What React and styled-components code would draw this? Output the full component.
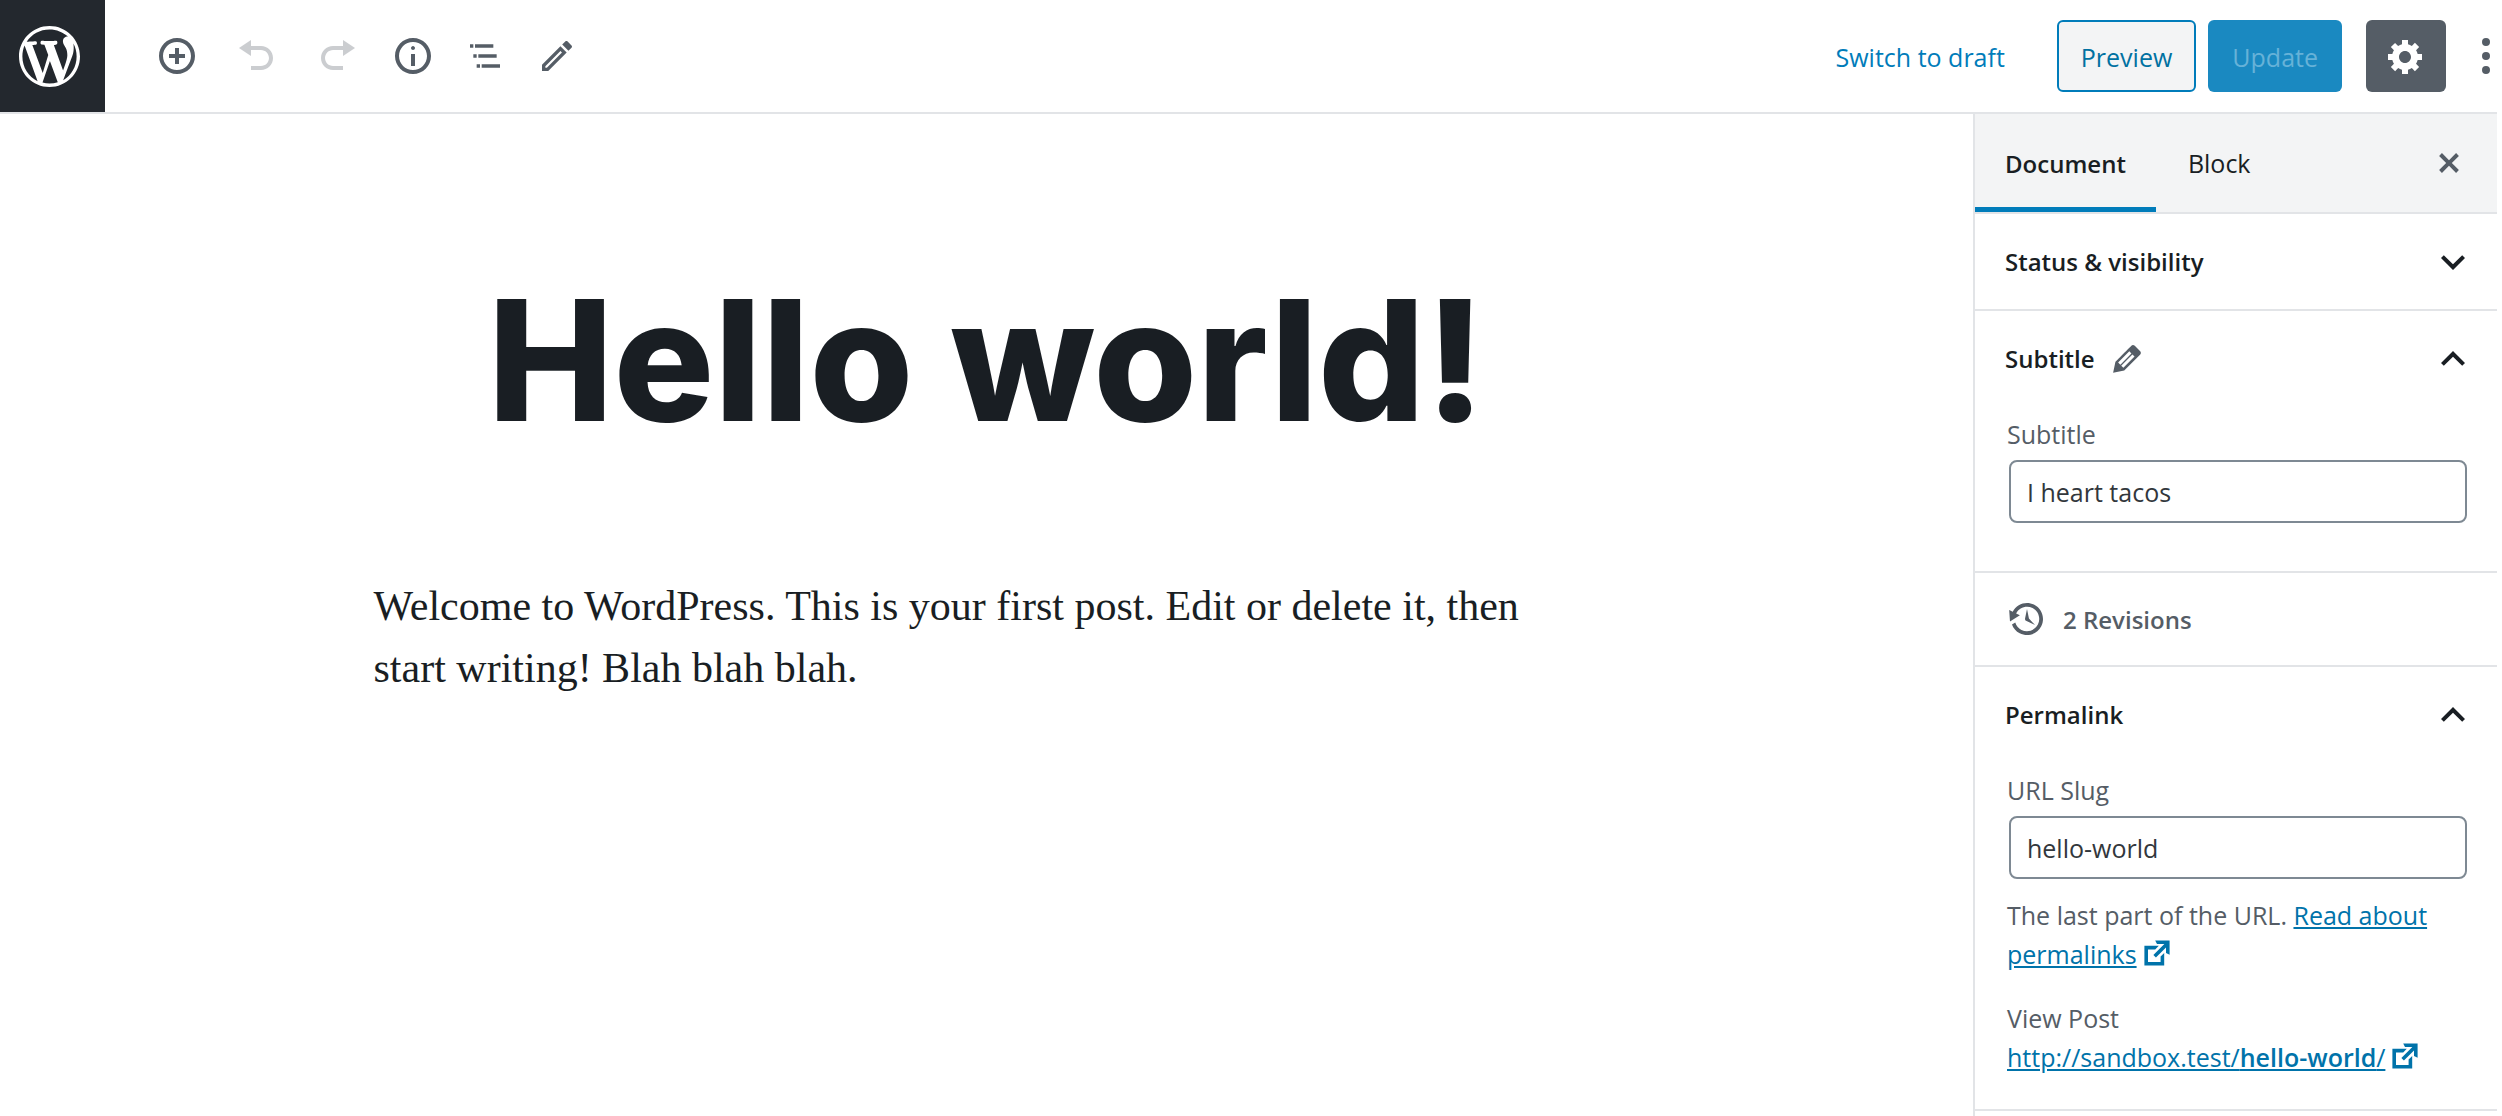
import React, { useState } from "react";
import styled, { createGlobalStyle, css } from "styled-components";

const color = {
  ink: "#191e23",
  slate: "#555d66",
  line: "#e2e4e7",
  blue: "#007cba",
  link: "#0073aa",
  pale: "#f3f4f5",
};

const size = {
  text: "25px",
  heading: "24px",
};

const GlobalStyle = createGlobalStyle`
  *, *::before, *::after { box-sizing: border-box; }
  body {
    margin: 0;
    background: #fff;
    color: ${color.ink};
    font-family: "Open Sans", "Noto Sans", sans-serif;
    font-size: ${size.text};
  }
  button, input { font: inherit; color: inherit; }
  svg { display: block; fill: currentColor; }
`;

const paths = {
  wordpress:
    "M20 10c0-5.51-4.49-10-10-10C4.48 0 0 4.49 0 10c0 5.52 4.48 10 10 10 5.51 0 10-4.48 10-10zM7.78 15.37L4.37 6.22c.55-.02 1.17-.08 1.17-.08.5-.06.44-1.13-.06-1.11 0 0-1.45.11-2.37.11-.18 0-.37 0-.58-.01C4.12 2.69 6.87 1.11 10 1.11c2.33 0 4.45.87 6.05 2.34-.68-.11-1.65.39-1.65 1.58 0 .74.45 1.36.9 2.1.35.61.55 1.36.55 2.46 0 1.49-1.4 5-1.4 5l-3.03-8.37c.54-.02.82-.17.82-.17.5-.05.44-1.25-.06-1.22 0 0-1.44.12-2.38.12-.87 0-2.33-.12-2.33-.12-.5-.03-.56 1.2-.06 1.22l.92.08 1.26 3.41zM17.41 10c.24-.64.74-1.87.43-4.25.7 1.29 1.05 2.71 1.05 4.25 0 3.29-1.73 6.24-4.4 7.78.97-2.59 1.94-5.2 2.92-7.78zM6.1 18.09C3.12 16.65 1.11 13.53 1.11 10c0-1.3.23-2.48.72-3.59C3.25 10.3 4.67 14.2 6.1 18.09zm4.03-6.63l2.58 6.98c-.86.29-1.76.45-2.71.45-.79 0-1.57-.11-2.29-.33.81-2.38 1.62-4.74 2.42-7.1z",
  insert:
    "M10 1c-5 0-9 4-9 9s4 9 9 9 9-4 9-9-4-9-9-9zm0 16c-3.9 0-7-3.1-7-7s3.1-7 7-7 7 3.1 7 7-3.1 7-7 7zm1-11H9v3H6v2h3v3h2v-3h3V9h-3V6z",
  undo: "M12 5H7V2L1 6l6 4V7h5c2.2 0 4 1.8 4 4s-1.8 4-4 4H7v2h5c3.3 0 6-2.7 6-6s-2.7-6-6-6z",
  redo: "M8 5h5V2l6 4-6 4V7H8c-2.2 0-4 1.8-4 4s1.8 4 4 4h5v2H8c-3.3 0-6-2.7-6-6s2.7-6 6-6z",
  info: "M9 15h2V9H9v6zm1-10c-.5 0-1 .5-1 1s.5 1 1 1 1-.5 1-1-.5-1-1-1zm0-4c-5 0-9 4-9 9s4 9 9 9 9-4 9-9-4-9-9-9zm0 16c-3.9 0-7-3.1-7-7s3.1-7 7-7 7 3.1 7 7-3.1 7-7 7z",
  outline:
    "M5 5H3v2h2V5zm3 8h11v-2H8v2zm9-8H6v2h11V5zM7 11H5v2h2v-2zm0 8h2v-2H7v2zm3-2v2h11v-2H10z",
  pencil:
    "M3 17.25V21h3.75L17.81 9.94l-3.75-3.75L3 17.25zM5.92 19H5v-.92l9.06-9.06.92.92L5.92 19zM20.71 5.63l-2.34-2.34c-.2-.2-.45-.29-.71-.29s-.51.1-.7.29l-1.83 1.83 3.75 3.75 1.83-1.83c.39-.39.39-1.02 0-1.41z",
  gear: "M18 12h-2.18c-.17.7-.44 1.35-.81 1.93l1.54 1.54-2.1 2.1-1.54-1.54c-.58.36-1.23.63-1.91.79V19H8v-2.18c-.68-.16-1.33-.43-1.91-.79l-1.54 1.54-2.12-2.12 1.54-1.54c-.36-.58-.63-1.23-.79-1.91H1V9.03h2.17c.16-.7.44-1.35.8-1.94L2.43 5.55l2.1-2.1 1.54 1.54c.58-.37 1.24-.64 1.93-.81V2h3v2.18c.68.16 1.33.43 1.91.79l1.54-1.54 2.12 2.12-1.54 1.54c.36.59.64 1.24.8 1.94H18V12zm-8.5 1.5c1.66 0 3-1.34 3-3s-1.34-3-3-3-3 1.34-3 3 1.34 3 3 3z",
  more: "M10 1a2 2 0 1 0 0 4 2 2 0 0 0 0-4zm0 7a2 2 0 1 0 0 4 2 2 0 0 0 0-4zm0 7a2 2 0 1 0 0 4 2 2 0 0 0 0-4z",
  close:
    "M14.95 6.46L11.41 10l3.54 3.54-1.41 1.41L10 11.42l-3.53 3.53-1.42-1.42L8.58 10 5.05 6.47l1.42-1.42L10 8.58l3.54-3.53z",
  down: "M7.41,8.59L12,13.17l4.59-4.58L18,10l-6,6l-6-6L7.41,8.59z",
  up: "M12,8l-6,6l1.41,1.41L12,10.83l4.59,4.58L18,14L12,8z",
  edit: "M13.89 3.39l2.71 2.72c.46.46.42 1.24.03 1.64l-8.01 8.02-5.56 1.16 1.16-5.58s7.6-7.63 7.99-8.03c.39-.39 1.22-.39 1.68.07zm-2.73 2.79l-5.59 5.61 1.11 1.11 5.54-5.65zm-2.97 8.23l5.58-5.6-1.07-1.08-5.59 5.6z",
  backup:
    "M13.65 2.88c3.93 2.01 5.48 6.84 3.47 10.77s-6.83 5.48-10.77 3.47c-1.87-.96-3.2-2.56-3.86-4.4l1.64-1.03c.45 1.57 1.52 2.95 3.08 3.76 3.01 1.54 6.69.35 8.23-2.66 1.55-3.01.36-6.69-2.65-8.24C9.78 3.01 6.1 4.2 4.56 7.21l1.88.97-4.95 3.08-.39-5.82 1.78.91C4.9 2.4 9.75.89 13.65 2.88zm-4.36 7.83C9.11 10.53 9 10.28 9 10c0-.07.03-.12.04-.19h-.01L10 5l.97 4.81L14 13l-4.5-2.12.02-.02c-.08-.04-.16-.09-.23-.15z",
  external:
    "M9 3h8v8l-2-1V6.92l-5.6 5.59-1.41-1.41L14.08 5H10zm3 12v-3l2-2v7H3V6h8L9 8H5v7h7z",
};

function Icon({ name, size = 40, box = 20, className }) {
  return (
    <svg className={className} width={size} height={size} viewBox={`0 0 ${box} ${box}`} aria-hidden="true">
      <path d={paths[name]} />
    </svg>
  );
}

const Editor = styled.div`
  display: flex;
  flex-direction: column;
  min-height: 100vh;
  padding-right: 5px;
`;

const Header = styled.header`
  display: flex;
  align-items: stretch;
  min-height: 114px;
  border-bottom: 2px solid ${color.line};
`;

const HomeLink = styled.a`
  display: flex;
  align-items: center;
  flex: none;
  width: 105px;
  padding-left: 19px;
  background: #23282e;
  color: #fff;
`;

const Tools = styled.div`
  display: flex;
  align-items: center;
  gap: 4px;
  padding-left: 36px;
`;

const ToolGroup = styled.div`
  display: flex;
  gap: ${(p) => p.$gap}px;
`;

const IconButton = styled.button`
  display: flex;
  align-items: center;
  justify-content: center;
  flex: none;
  width: 72px;
  height: 72px;
  padding: 0;
  border: 0;
  background: none;
  color: ${color.slate};
  cursor: pointer;

  &:disabled {
    opacity: 0.3;
    cursor: default;
  }
`;

const Actions = styled.div`
  display: flex;
  align-items: center;
  gap: 12px;
  margin-left: auto;
`;

const TextButton = styled.button`
  height: 72px;
  padding: 2px 22px 0;
  border: 2px solid transparent;
  border-radius: 6px;
  background: none;
  color: ${color.blue};
  cursor: pointer;

  ${(p) =>
    p.$kind === "link" &&
    css`
      margin-right: 16px;
    `}
  ${(p) =>
    p.$kind === "outline" &&
    css`
      border-color: ${color.blue};
      background: ${color.pale};
      color: #0071a1;
    `}
  ${(p) =>
    p.$kind === "primary" &&
    css`
      background: #1a89c1;
      color: #66b2d8;
    `}
`;

const SettingsButton = styled(IconButton)`
  width: 80px;
  margin-left: 12px;
  border-radius: 6px;
  background: ${color.slate};
  color: #fff;
`;

const MoreButton = styled(IconButton)`
  width: 40px;
  margin: 0 -9px 0 8px;
`;

const Body = styled.div`
  display: flex;
  flex: 1;
`;

const Canvas = styled.main`
  flex: 1;
  min-width: 0;
  padding: 144px 24px 0;
`;

const Post = styled.article`
  max-width: 1226px;
  margin: 0 auto;
`;

const Title = styled.h1`
  margin: 0;
  font-family: Inter, "Liberation Sans", sans-serif;
  font-size: 168px;
  font-weight: 800;
  line-height: 204px;
  text-align: center;
`;

const Paragraph = styled.p`
  margin: 113px 0 0;
  font-family: "Liberation Serif", serif;
  font-size: 42px;
  line-height: 62px;
`;

const Sidebar = styled.aside`
  flex: none;
  width: 524px;
  border-left: 2px solid ${color.line};
`;

const TabBar = styled.div`
  display: flex;
  gap: 2px;
  height: 100px;
  border-bottom: 2px solid ${color.line};
  background: ${color.pale};
`;

const Tab = styled.button`
  padding: 5px 30px 0;
  border: 0;
  border-bottom: 5px solid ${(p) => (p.$active ? color.blue : "transparent")};
  background: none;
  font-size: ${(p) => (p.$active ? size.heading : size.text)};
  font-weight: ${(p) => (p.$active ? 600 : 400)};
  cursor: pointer;
`;

const CloseButton = styled(IconButton)`
  align-self: center;
  margin: 0 12px 0 auto;
`;

const Panel = styled.section`
  border-bottom: 2px solid ${color.line};
`;

const PanelHeading = styled.h2`
  margin: 0;
  font-size: ${size.heading};
  font-weight: 600;
`;

const PanelToggle = styled.button`
  display: flex;
  align-items: center;
  gap: 12px;
  width: 100%;
  height: 95px;
  padding: 0 20px 0 30px;
  border: 0;
  background: none;
  cursor: pointer;
`;

const EditMark = styled(Icon)`
  color: ${color.slate};
`;

const Arrow = styled(Icon)`
  margin-left: auto;
`;

const PanelBody = styled.div`
  display: flex;
  flex-direction: column;
  padding: 10px 30px ${(p) => p.$bottom}px 32px;
  color: ${color.slate};
`;

const Label = styled.label`
  margin-bottom: 8px;
  line-height: 36px;
`;

const TextInput = styled.input`
  min-width: 0;
  height: 63px;
  margin-left: 2px;
  padding: 0 16px;
  border: 2px solid #7e8993;
  border-radius: 8px;
  background: #fff;
  color: #32373c;
`;

const Help = styled.p`
  margin: ${(p) => p.$top}px 0 0;
  line-height: 39px;
`;

const Link = styled.a`
  color: ${color.link};
  text-decoration: underline;

  b {
    font-weight: 600;
  }
`;

const External = styled(Icon)`
  display: inline-block;
  vertical-align: text-bottom;
  margin-left: 2px;
`;

const Revisions = styled.a`
  display: flex;
  align-items: center;
  gap: 16px;
  height: 92px;
  padding: 0 30px 0 32px;
  color: ${color.slate};
  font-size: ${size.heading};
  font-weight: 600;
  text-decoration: none;
`;

function CollapsiblePanel({ title, mark, initiallyOpen, bottom, children }) {
  const [open, setOpen] = useState(initiallyOpen);
  return (
    <Panel>
      <PanelHeading>
        <PanelToggle type="button" aria-expanded={open} onClick={() => setOpen(!open)}>
          <span>{title}</span>
          {mark && <EditMark name="edit" />}
          <Arrow name={open ? "up" : "down"} size={48} box={24} />
        </PanelToggle>
      </PanelHeading>
      {open && children && <PanelBody $bottom={bottom}>{children}</PanelBody>}
    </Panel>
  );
}

export default function App() {
  const [tab, setTab] = useState("Document");
  const [subtitle, setSubtitle] = useState("I heart tacos");
  const [slug, setSlug] = useState("hello-world");

  return (
    <>
      <GlobalStyle />
      <Editor>
        <Header>
          <HomeLink href="#posts" aria-label="View Posts">
            <Icon name="wordpress" size={61} />
          </HomeLink>
          <Tools>
            <ToolGroup $gap={8}>
              <IconButton type="button" aria-label="Add block"><Icon name="insert" /></IconButton>
              <IconButton type="button" aria-label="Undo" disabled><Icon name="undo" /></IconButton>
              <IconButton type="button" aria-label="Redo" disabled><Icon name="redo" /></IconButton>
            </ToolGroup>
            <ToolGroup $gap={0}>
              <IconButton type="button" aria-label="Content structure"><Icon name="info" /></IconButton>
              <IconButton type="button" aria-label="Block navigation"><Icon name="outline" box={24} /></IconButton>
              <IconButton type="button" aria-label="Edit mode"><Icon name="pencil" box={24} /></IconButton>
            </ToolGroup>
          </Tools>
          <Actions>
            <TextButton type="button" $kind="link">Switch to draft</TextButton>
            <TextButton type="button" $kind="outline">Preview</TextButton>
            <TextButton type="button" $kind="primary" disabled>Update</TextButton>
            <SettingsButton type="button" aria-label="Settings"><Icon name="gear" /></SettingsButton>
            <MoreButton type="button" aria-label="More tools"><Icon name="more" /></MoreButton>
          </Actions>
        </Header>
        <Body>
          <Canvas>
            <Post>
              <Title>Hello world!</Title>
              <Paragraph>
                Welcome to WordPress. This is your first post. Edit or delete it, then start writing! Blah blah blah.
              </Paragraph>
            </Post>
          </Canvas>
          <Sidebar>
            <TabBar>
              {["Document", "Block"].map((name) => (
                <Tab key={name} type="button" $active={tab === name} onClick={() => setTab(name)}>
                  {name}
                </Tab>
              ))}
              <CloseButton type="button" aria-label="Close settings"><Icon name="close" /></CloseButton>
            </TabBar>
            <CollapsiblePanel title="Status &amp; visibility" />
            <CollapsiblePanel title="Subtitle" mark initiallyOpen bottom={48}>
              <Label htmlFor="subtitle">Subtitle</Label>
              <TextInput id="subtitle" type="text" value={subtitle} onChange={(e) => setSubtitle(e.target.value)} />
            </CollapsiblePanel>
            <Panel>
              <Revisions href="#revisions"><Icon name="backup" />2 Revisions</Revisions>
            </Panel>
            <CollapsiblePanel title="Permalink" initiallyOpen bottom={32}>
              <Label htmlFor="slug">URL Slug</Label>
              <TextInput id="slug" type="text" value={slug} onChange={(e) => setSlug(e.target.value)} />
              <Help $top={17}>
                The last part of the URL.{" "}
                <Link href="#permalinks">Read about permalinks<External name="external" size={36} /></Link>
              </Help>
              <Help $top={25}>
                View Post
                <br />
                <Link href="#hello-world">
                  http://sandbox.test/<b>hello-world</b>/<External name="external" size={36} />
                </Link>
              </Help>
            </CollapsiblePanel>
          </Sidebar>
        </Body>
      </Editor>
    </>
  );
}
